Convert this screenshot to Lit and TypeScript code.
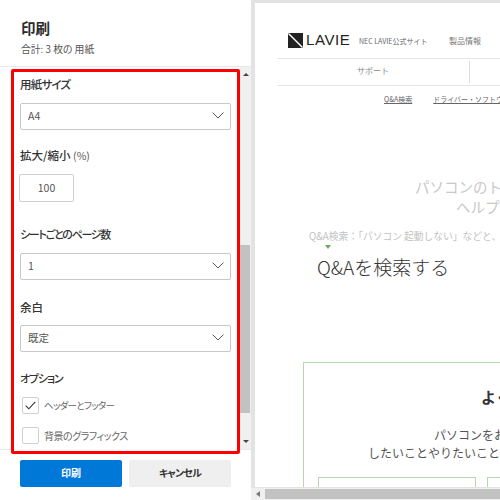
import { LitElement, html, css } from "lit";
import { customElement } from "lit/decorators.js";

const chevron = html`<svg class="chev" width="12" height="7" viewBox="0 0 12 7"><path d="M.6.6 6 6 11.4.6" fill="none" stroke="#555" stroke-width="1"/></svg>`;

@customElement("app-root")
export class AppRoot extends LitElement {
  static styles = css`
    :host { display: flex; width: 500px; height: 500px; overflow: hidden; background: #e3e3e3; font-family: "Noto Sans CJK JP", "Noto Sans", sans-serif; color: #2b2b2b; }
    * { box-sizing: border-box; }
    .panel { width: 251px; height: 500px; background: #fff; display: flex; flex-direction: column; flex: none; font-feature-settings: "palt"; }
    .head { height: 67px; padding: 18px 0 0 21px; border-bottom: 1px solid #e8e8e8; flex: none; }
    .title { font-size: 14.5px; font-weight: 700; line-height: 20px; }
    .sub { font-size: 9.8px; line-height: 14px; margin-top: 4px; color: #555; }
    .mid { height: 383px; display: flex; flex: none; border-bottom: 1px solid #e8e8e8; }
    .form { width: 229px; height: 385px; margin: 2px 0 0 11px; border: 3px solid #f00; border-radius: 2px; padding: 3px 6px 0 6px; background: #fff; flex: none; position: relative; z-index: 1; }
    .label { font-size: 11.5px; font-weight: 500; line-height: 18px; height: 18px; color: #333; }
    .label small { font-size: 10.5px; font-weight: 400; color: #555; }
    .select { height: 27px; width: 211px; border: 1px solid #c8c8c8; border-radius: 2px; display: flex; align-items: center; justify-content: space-between; padding: 0 6px 2px 7px; font-size: 10.5px; color: #555; margin-top: 10px; }
    .input { width: 55px; height: 28px; border: 1px solid #d0d0d0; border-radius: 2px; font-size: 10.5px; color: #555; display: flex; align-items: center; justify-content: center; padding-bottom: 2px; margin: 10px 0 0 -1px; }
    .l1 { letter-spacing: -.8px; }
    .l2 { margin-top: 16px; }
    .l3 { margin-top: 23px; font-size: 11px; letter-spacing: -1.3px; }
    .l4 { margin-top: 18px; }
    .s4 { margin-top: 9px; }
    .l5 { margin-top: 17px; font-size: 11px; letter-spacing: -1.2px; }
    .check { display: flex; align-items: center; gap: 5px; color: #666; height: 18px; margin: 9px 0 0 2px; }
    .check + .check { margin-top: 12px; }
    .c1 { font-size: 9.5px; letter-spacing: -.7px; }
    .c2 { font-size: 10px; letter-spacing: -.5px; }
    .box { width: 17px; height: 17px; border: 1px solid #d0d0d0; border-radius: 2px; display: flex; align-items: center; justify-content: center; flex: none; }
    .vbar { width: 11px; height: 382px; background: #f0f0f0; display: flex; flex-direction: column; align-items: center; justify-content: space-between; padding: 6px 0; position: relative; flex: none; }
    .thumb { position: absolute; left: 0; top: 178px; width: 10px; height: 168px; background: #c2c2c2; }
    .tri-up { width: 0; height: 0; border: 3px solid transparent; border-top: 0; border-bottom: 3px solid #444; }
    .tri-down { width: 0; height: 0; border: 3px solid transparent; border-bottom: 0; border-top: 3px solid #444; }
    .foot { display: flex; gap: 7px; padding: 10px 0 0 20px; }
    .btn { width: 102px; height: 27px; border-radius: 2px; display: flex; align-items: center; justify-content: center; font-size: 10px; font-weight: 700; padding-bottom: 2px; }
    .primary { background: #0078d7; color: #fff; }
    .second { background: #efefef; color: #333; letter-spacing: -.8px; }
    .right { flex: 1; display: flex; flex-direction: column; padding: 3px 0 0 4px; min-width: 0; }
    .page { flex: none; height: 484px; width: 245px; background: #fff; overflow: hidden; position: relative; padding: 24px 0 0 22px; color: #666; }
    .inner { width: 480px; }
    .top { display: flex; align-items: center; height: 26px; padding-left: 11px; }
    .logo { display: flex; align-items: center; gap: 3px; width: 71px; flex: none; }
    .lavie { font-family: "Liberation Sans", sans-serif; font-size: 15px; line-height: 16px; color: #222; letter-spacing: .6px; }
    .nec { font-size: 7px; width: 90px; flex: none; color: #666; margin-top: 2px; }
    .prod { font-size: 8px; color: #777; }
    .nav { border-top: 1px solid #e6e6e6; border-bottom: 1px solid #e6e6e6; height: 28px; display: flex; align-items: center; margin-top: 5px; }
    .nav .cell { width: 193px; height: 22px; border-right: 1px solid #ddd; text-align: center; font-size: 8px; line-height: 19px; color: #888; }
    .links { display: flex; font-size: 7px; height: 14px; padding-left: 107px; gap: 21px; margin-top: 6px; color: #666; }
    .links span { text-decoration: underline; line-height: 14px; white-space: nowrap; }
    .hero { font-size: 14.5px; line-height: 20px; color: #c9c9c9; margin-top: 71px; white-space: nowrap; }
    .hero div:first-child { padding-left: 138px; }
    .hero div:last-child { padding-left: 179px; }
    .hint { font-size: 9.75px; line-height: 14px; color: #c2c2c2; margin: 12px 0 0 32px; white-space: nowrap; }
    .mark { width: 0; height: 0; border: 3.5px solid transparent; border-top: 4px solid #6aa962; border-bottom: 0; margin: 2px 0 0 48px; }
    .qa { font-size: 19px; line-height: 26px; color: #333; margin: 5px 0 0 40px; white-space: nowrap; font-weight: 300; }
    .card { width: 400px; height: 200px; border: 1px solid #b7d6b3; margin: 82px 0 0 26px; padding: 24px 14px 0; }
    .card h3 { margin: 0; font-size: 15px; line-height: 20px; font-weight: 700; color: #333; padding-left: 163px; white-space: nowrap; }
    .card p { margin: 19px 0 0; font-size: 12px; line-height: 18px; color: #555; white-space: nowrap; }
    .card p span { display: block; }
    .card p span:first-child { padding-left: 116px; }
    .card p span:last-child { padding-left: 50px; }
    .boxes { display: flex; gap: 11px; margin-top: 15px; }
    .boxes div { width: 158px; height: 30px; border: 1px solid #b7d6b3; flex: none; }
    .hbar { flex: none; height: 12px; margin: 1px 0 0 -4px; background: #f0f0f0; display: flex; align-items: center; padding-left: 5px; gap: 5px; }
    .tri-left { width: 0; height: 0; border: 3px solid transparent; border-left: 0; border-right: 4px solid #777; }
    .hthumb { flex: 1; height: 10px; background: #c2c2c2; }
  `;

  render() {
    return html`
      <div class="panel">
        <div class="head">
          <div class="title">印刷</div>
          <div class="sub">合計: 3 枚の 用紙</div>
        </div>
        <div class="mid">
          <div class="form">
            <div class="label l1">用紙サイズ</div>
            <div class="select"><span>A4</span>${chevron}</div>
            <div class="label l2">拡大/縮小 <small>(%)</small></div>
            <div class="input">100</div>
            <div class="label l3">シートごとのページ数</div>
            <div class="select"><span>1</span>${chevron}</div>
            <div class="label l4">余白</div>
            <div class="select s4"><span>既定</span>${chevron}</div>
            <div class="label l5">オプション</div>
            <div class="check c1">
              <span class="box"><svg width="11" height="9" viewBox="0 0 11 9"><path d="M.7 4.6 3.8 7.8 10.3.8" fill="none" stroke="#333" stroke-width="1.1"/></svg></span>
              <span>ヘッダーとフッター</span>
            </div>
            <div class="check c2"><span class="box"></span><span>背景のグラフィックス</span></div>
          </div>
          <div class="vbar"><span class="tri-up"></span><span class="thumb"></span><span class="tri-down"></span></div>
        </div>
        <div class="foot">
          <div class="btn primary">印刷</div>
          <div class="btn second">キャンセル</div>
        </div>
      </div>
      <div class="right">
        <div class="page">
          <div class="inner">
            <div class="top">
              <div class="logo">
                <svg width="15" height="15" viewBox="0 0 15 15"><rect width="15" height="15" fill="#222"/><path d="M0 1 1 0 15 14 14 15Z" fill="#fff"/></svg>
                <span class="lavie">LAVIE</span>
              </div>
              <span class="nec">NEC LAVIE公式サイト</span>
              <span class="prod">製品情報</span>
            </div>
            <div class="nav"><div class="cell">サポート</div></div>
            <div class="links"><span>Q&amp;A検索</span><span>ドライバー・ソフトウェア</span></div>
            <div class="hero"><div>パソコンのトラブル</div><div>ヘルプ情報</div></div>
            <div class="hint">Q&amp;A検索：「パソコン 起動しない」などと、入力</div>
            <div class="mark"></div>
            <div class="qa">Q&amp;Aを検索する</div>
            <div class="card">
              <h3>よくある</h3>
              <p><span>パソコンをお使いの</span><span>したいことやりたいこと、お困りごと</span></p>
              <div class="boxes"><div></div><div></div></div>
            </div>
          </div>
        </div>
        <div class="hbar"><span class="tri-left"></span><span class="hthumb"></span></div>
      </div>
    `;
  }
}
